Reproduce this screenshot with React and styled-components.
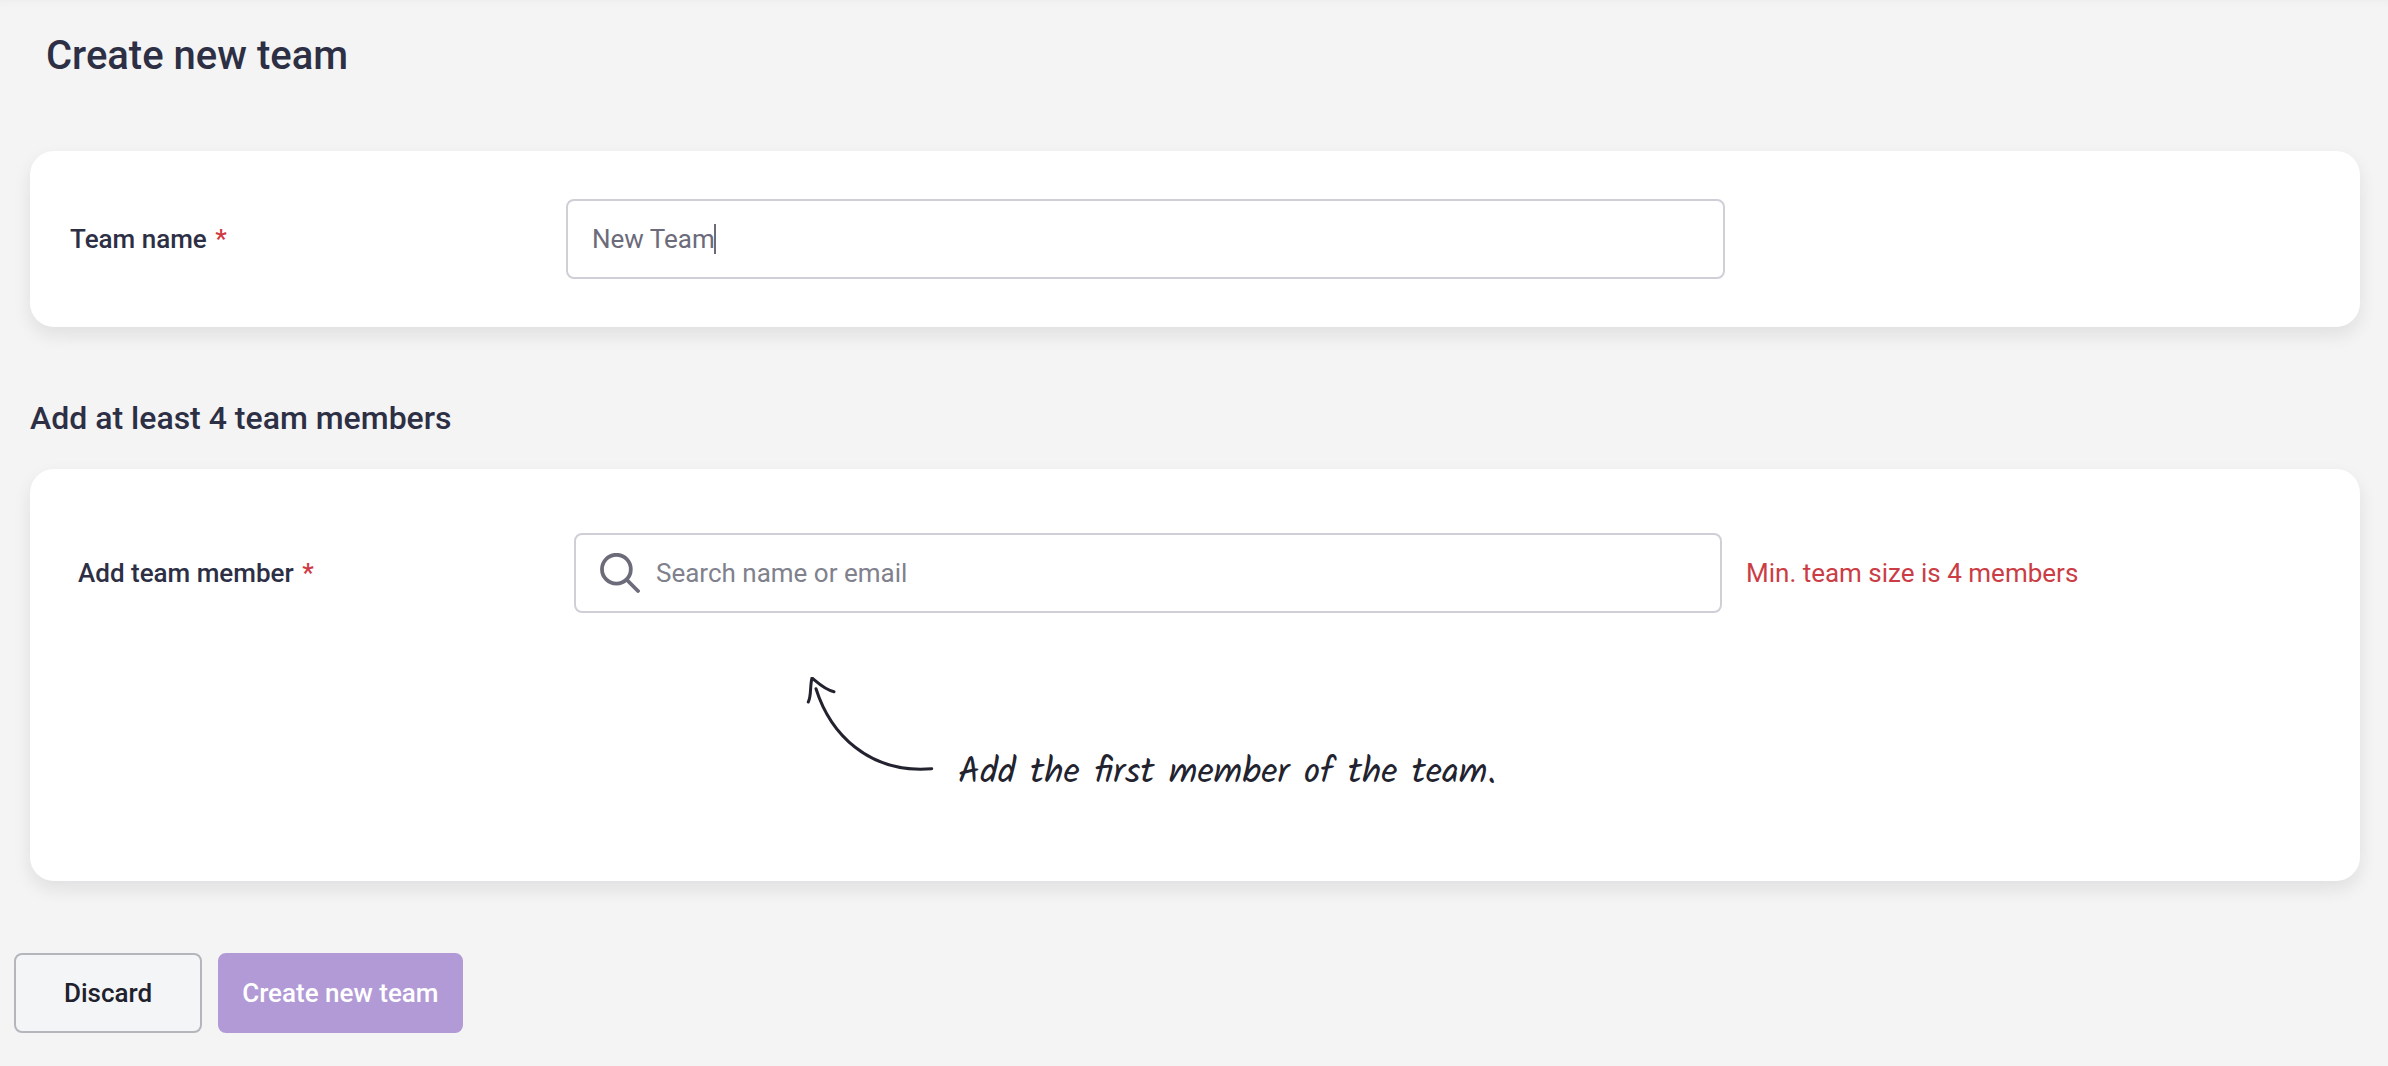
import React, { useState } from "react";
import styled, { createGlobalStyle } from "styled-components";

const GlobalStyle = createGlobalStyle`
  *, *::before, *::after { box-sizing: border-box; }
  body {
    margin: 0;
    background: #f4f4f4;
    color: #2d2f45;
    font-family: Roboto, "Liberation Sans", sans-serif;
    font-size: 26px;
    line-height: 32px;
  }
`;

const Page = styled.main`
  min-height: 100vh;
  padding: 32px 28px 32px 30px;
  box-shadow: inset 0 8px 8px -6px rgba(0, 0, 0, 0.03);
`;

const Title = styled.h1`
  margin: 0 0 71px;
  padding-left: 16px;
  font-size: 40px;
  font-weight: 500;
  line-height: 48px;
`;

const SectionTitle = styled.h2`
  margin: 71px 0 31px;
  font-size: 32px;
  font-weight: 500;
  line-height: 40px;
`;

const Card = styled.section`
  padding: ${({ $roomy }) => ($roomy ? "64px 48px 84px" : "48px 40px")};
  border-radius: 24px;
  background: #fff;
  box-shadow: 0 8px 18px rgba(20, 26, 40, 0.09);
`;

const Row = styled.div`
  display: grid;
  grid-template-columns: ${({ $columns }) => $columns};
  align-items: center;
`;

const Label = styled.label`
  font-weight: 500;
`;

const Required = styled.span`
  margin-left: 2px;
  color: #d0393f;
`;

const Field = styled.div`
  position: relative;
  display: flex;
  align-items: center;
  gap: 16px;
  height: 80px;
  padding: 0 24px;
  border: 2px solid #d0cfd8;
  border-radius: 8px;
  background: #fff;
`;

const TextInput = styled.input`
  flex: 1;
  min-width: 0;
  padding: 0;
  border: 0;
  outline: 0;
  background: transparent;
  color: #6b6b7a;
  font: inherit;

  &::placeholder {
    color: #80818c;
    opacity: 1;
  }
`;

const Caret = styled.span`
  position: absolute;
  left: 146px;
  top: 23px;
  width: 2px;
  height: 30px;
  background: #6b6b7a;
`;

const ErrorText = styled.p`
  margin: 0;
  padding-left: 24px;
  color: #cb3d45;
`;

const Hint = styled.div`
  grid-column: 2 / -1;
  display: flex;
  align-items: flex-end;
  gap: 24px;
  margin-top: 64px;
  padding-left: 232px;
`;

const HintText = styled.p`
  margin: 0;
  color: #22232f;
  font-family: Kalam, Lato, cursive;
  font-size: 36px;
  line-height: 46px;
`;

const Actions = styled.div`
  display: flex;
  gap: 16px;
  margin: 72px 0 0 -16px;
`;

const Button = styled.button`
  height: 80px;
  padding: 0 ${({ $primary }) => ($primary ? "22px" : "48px")};
  border: 2px solid ${({ $primary }) => ($primary ? "#b29ad6" : "#b4b6bb")};
  border-radius: 8px;
  background: ${({ $primary }) => ($primary ? "#b29ad6" : "#f4f5f7")};
  color: ${({ $primary }) => ($primary ? "#fff" : "#20212d")};
  font: inherit;
  font-weight: 500;
`;

function SearchIcon() {
  return (
    <svg width="40" height="40" viewBox="0 0 40 40" fill="none" stroke="#6b6b7a" strokeWidth="3.8" strokeLinecap="round" aria-hidden="true">
      <circle cx="16.4" cy="16.2" r="14.4" />
      <path d="M27 27 L38 38" />
    </svg>
  );
}

function ArrowDrawing() {
  return (
    <svg width="128" height="120" viewBox="0 0 128 120" fill="none" stroke="#22232f" strokeWidth="3" strokeLinecap="round" strokeLinejoin="round" aria-hidden="true">
      <path d="M2.3 25 C5.5 19 3.8 9 6 1 C12 6 19 13 28 14.7" />
      <path d="M10 11.7 C24 56 62 97 125.7 91.7" />
    </svg>
  );
}

export default function App() {
  const [name, setName] = useState("New Team");
  const [query, setQuery] = useState("");

  return (
    <>
      <GlobalStyle />
      <Page>
        <Title>Create new team</Title>
        <Card>
          <Row $columns="496fr 1159fr 595fr">
            <Label htmlFor="team-name">
              Team name <Required>*</Required>
            </Label>
            <Field>
              <TextInput id="team-name" value={name} onChange={(e) => setName(e.target.value)} />
              <Caret />
            </Field>
          </Row>
        </Card>

        <SectionTitle>Add at least 4 team members</SectionTitle>
        <Card $roomy>
          <Row $columns="496fr 1148fr 590fr">
            <Label htmlFor="member-search">
              Add team member <Required>*</Required>
            </Label>
            <Field>
              <SearchIcon />
              <TextInput
                id="member-search"
                placeholder="Search name or email"
                value={query}
                onChange={(e) => setQuery(e.target.value)}
              />
            </Field>
            <ErrorText>Min. team size is 4 members</ErrorText>
            <Hint>
              <ArrowDrawing />
              <HintText>Add the first member of the team.</HintText>
            </Hint>
          </Row>
        </Card>

        <Actions>
          <Button type="button">Discard</Button>
          <Button type="submit" $primary>Create new team</Button>
        </Actions>
      </Page>
    </>
  );
}
